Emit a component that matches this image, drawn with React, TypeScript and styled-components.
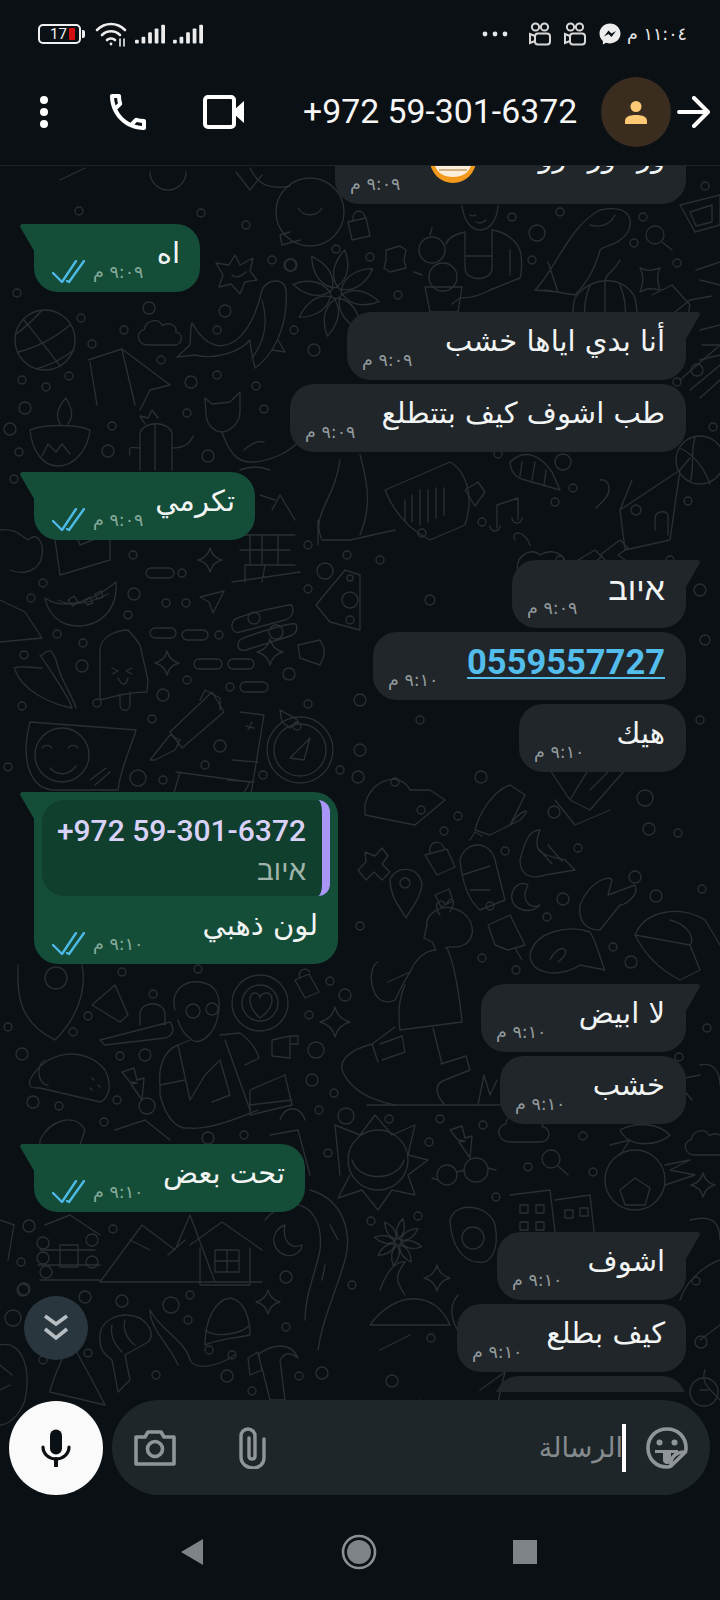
import React from 'react';
import styled, { createGlobalStyle } from 'styled-components';

const ARABIC = '"DejaVu Sans", "Liberation Sans", sans-serif';
const HEBREW = '"Liberation Sans", "DejaVu Sans", sans-serif';
const LATIN = 'Roboto, "Liberation Sans", sans-serif';

const GlobalStyle = createGlobalStyle`
  html, body {
    margin: 0;
    padding: 0;
    background: #0b1014;
  }
`;

const Screen = styled.div`
  width: 720px;
  height: 1600px;
  display: flex;
  flex-direction: column;
  overflow: hidden;
  background: #0b1014;
  color: #fff;
  font-family: ${LATIN};
`;

const StatusBar = styled.div`
  height: 64px;
  flex: none;
  display: flex;
  align-items: center;
  justify-content: space-between;
  padding: 4px 33px 0 38px;
  box-sizing: border-box;
`;

const StatusGroup = styled.div`
  display: flex;
  align-items: center;
  gap: ${({ $gap }: { $gap: number }) => $gap}px;
`;

const BatteryBox = styled.div`
  position: relative;
  width: 43px;
  height: 20px;
  box-sizing: border-box;
  border: 2px solid #f0f0f0;
  border-radius: 5px;
  font-size: 15px;
  line-height: 16px;
  padding-left: 10px;
  color: #f2f2f2;
  margin-right: 6px;

  &::before {
    content: '';
    position: absolute;
    right: 4px;
    top: 2px;
    width: 6px;
    height: 12px;
    border-radius: 1px;
    background: #d40f12;
  }

  &::after {
    content: '';
    position: absolute;
    right: -6px;
    top: 4px;
    width: 3px;
    height: 8px;
    border-radius: 0 2px 2px 0;
    background: #f0f0f0;
  }
`;

const MoreDots = styled.svg`
  display: block;
  margin-right: 8px;
`;

const ClockText = styled.span`
  font-family: ${ARABIC};
  font-size: 17.5px;
  color: #e6e6e6;
  margin-left: -7px;
  direction: rtl;
`;

const Header = styled.header`
  height: 102px;
  flex: none;
  display: flex;
  align-items: center;
  box-sizing: border-box;
  padding: 0 9px 6px 38px;
  border-bottom: 1px solid #1d2226;
`;

const HeaderIcon = styled.svg`
  display: block;
  flex: none;
  margin-right: ${({ $gap }: { $gap: number }) => $gap}px;
`;

const Title = styled.div`
  flex: 1;
  font-size: 33.8px;
  white-space: nowrap;
  color: #f6f6f6;
`;

const Avatar = styled.div`
  width: 70px;
  height: 70px;
  flex: none;
  border-radius: 50%;
  background: #3a2d20;
  display: flex;
  align-items: center;
  justify-content: center;
  margin-right: 6px;
`;

const Chat = styled.main`
  position: relative;
  flex: 1;
  min-height: 0;
  display: flex;
  flex-direction: column;
  overflow: hidden;
`;

const Wallpaper = styled.svg`
  position: absolute;
  inset: 0;
  width: 720px;
  height: 1337px;
  fill: none;
  stroke: #2a2f33;
  stroke-width: 1.35;
  stroke-linecap: round;
  stroke-linejoin: round;
`;

const MessageList = styled.div`
  position: relative;
  flex: 1;
  min-height: 0;
  overflow: hidden;
  display: flex;
  flex-direction: column;
  padding: 0 34px;
  box-sizing: border-box;
`;

const MessageScroller = styled.div`
  display: flex;
  flex-direction: column;
  margin-top: -30px;
`;

type Side = 'in' | 'out';

const Bubble = styled.div<{ $side: Side; $width: number; $tail?: boolean; $gap: number }>`
  position: relative;
  flex: none;
  direction: rtl;
  width: ${({ $width }) => $width}px;
  margin-top: ${({ $gap }) => $gap}px;
  align-self: ${({ $side }) => ($side === 'in' ? 'flex-end' : 'flex-start')};
  background: ${({ $side }) => ($side === 'in' ? '#202629' : '#144d38')};
  border-radius: 24px;
  ${({ $tail, $side }) =>
    $tail && ($side === 'in' ? 'border-top-right-radius: 0;' : 'border-top-left-radius: 0;')}

  ${({ $tail, $side }) =>
    $tail &&
    `&::before {
      content: '';
      position: absolute;
      top: 0;
      width: 15px;
      height: 27px;
      background: inherit;
      ${
        $side === 'in'
          ? 'right: -14px; clip-path: polygon(0 0, 88% 0, 100% 6%, 96% 14%, 6% 100%, 0 100%);'
          : 'left: -14px; clip-path: polygon(100% 0, 12% 0, 0 6%, 4% 14%, 94% 100%, 100% 100%);'
      }
    }`}
`;

const BubbleRow = styled.div<{ $side: Side }>`
  height: 68px;
  display: flex;
  justify-content: space-between;
  box-sizing: border-box;
  padding: ${({ $side }) => ($side === 'in' ? '0 21px 0 15px' : '0 20px 0 18px')};
`;

const MessageText = styled.div<{ $font?: string; $size?: number }>`
  font-family: ${({ $font }) => $font || ARABIC};
  font-size: ${({ $size }) => $size || 29}px;
  line-height: 44px;
  margin-top: 7px;
  white-space: nowrap;
  color: #f2f4f4;
`;

const LinkText = styled.a`
  font-family: ${LATIN};
  font-size: 34.5px;
  font-weight: 700;
  line-height: 44px;
  margin-top: 8px;
  height: 42px;
  color: #53bdeb;
  text-decoration: underline;
  text-decoration-thickness: 2px;
  text-underline-offset: 3px;
`;

const Meta = styled.div`
  display: flex;
  align-items: center;
  gap: 8px;
  height: 24px;
  margin-top: 36px;
`;

const Time = styled.span<{ $side: Side }>`
  font-family: ${ARABIC};
  font-size: 17.5px;
  white-space: nowrap;
  letter-spacing: 0.5px;
  color: ${({ $side }) => ($side === 'in' ? '#949b9f' : '#86ab9a')};
`;

const Quote = styled.div`
  position: relative;
  margin: 8px 8px 0;
  height: 96px;
  box-sizing: border-box;
  border-radius: 22px 12px 12px 22px;
  background: #113f2e;
  overflow: hidden;
  padding: 9px 16px 0 0;
  border-right: 8px solid #a996f7;
`;

const QuoteName = styled.div`
  font-family: ${LATIN};
  font-size: 30px;
  font-weight: 500;
  line-height: 44px;
  color: #d9d2f8;
  direction: ltr;
  text-align: right;
`;

const QuoteBody = styled.div`
  font-family: ${HEBREW};
  font-size: 28px;
  line-height: 36px;
  color: #9fb3a9;
`;

const ScrollDown = styled.div`
  position: absolute;
  left: 24px;
  top: 1130px;
  width: 64px;
  height: 64px;
  border-radius: 50%;
  background: #2a363d;
  display: flex;
  align-items: center;
  justify-content: center;
`;

const ComposerRow = styled.div`
  position: relative;
  flex: none;
  display: flex;
  align-items: center;
  gap: 9px;
  padding: 8px 10px 8px 9px;
`;

const MicButton = styled.div`
  width: 94px;
  height: 94px;
  flex: none;
  border-radius: 50%;
  background: #fafafa;
  display: flex;
  align-items: center;
  justify-content: center;
`;

const Composer = styled.div`
  flex: 1;
  height: 95px;
  border-radius: 48px;
  background: #1f2629;
  display: flex;
  align-items: center;
  box-sizing: border-box;
  padding: 0 22px 0 22px;
`;

const ComposerIcon = styled.svg<{ $gap?: number }>`
  display: block;
  flex: none;
  margin-right: ${({ $gap }) => $gap || 0}px;
`;

const Placeholder = styled.div`
  flex: 1;
  display: flex;
  justify-content: flex-end;
  align-items: center;
  font-family: ${ARABIC};
  font-size: 27px;
  color: #858b8e;
  margin-right: 20px;
`;

const Caret = styled.span`
  width: 4px;
  height: 48px;
  background: #fff;
  margin-left: -1px;
`;

const NavBar = styled.nav`
  height: 97px;
  flex: none;
  display: flex;
  align-items: center;
  box-sizing: border-box;
  padding: 0 183px 0 180px;
  justify-content: space-between;
`;

const NavSquare = styled.div`
  width: 24px;
  height: 24px;
  background: #7e8387;
`;

/* helpers that build wallpaper outlines */
const ring = (x: number, y: number, r: number) =>
  `M${x - r} ${y}a${r} ${r} 0 1 0 ${2 * r} 0a${r} ${r} 0 1 0 ${-2 * r} 0`;
const sparkle = (x: number, y: number, r: number) =>
  `M${x} ${y - r}Q${x + r * 0.2} ${y - r * 0.2} ${x + r} ${y}Q${x + r * 0.2} ${y + r * 0.2} ${x} ${y + r}Q${x - r * 0.2} ${y + r * 0.2} ${x - r} ${y}Q${x - r * 0.2} ${y - r * 0.2} ${x} ${y - r}Z`;
const pill = (x: number, y: number, w: number, h: number) =>
  `M${x + h / 2} ${y}h${w - h}a${h / 2} ${h / 2} 0 0 1 0 ${h}h${h - w}a${h / 2} ${h / 2} 0 0 1 0 ${-h}Z`;
const cloud = (x: number, y: number, s: number) =>
  `M${x} ${y}c${-9 * s} 0 ${-11 * s} ${-11 * s} ${-3 * s} ${-13 * s}c${1 * s} ${-8 * s} ${12 * s} ${-10 * s} ${15 * s} ${-3 * s}c${5 * s} ${-4 * s} ${13 * s} 0 ${11 * s} ${5 * s}c${7 * s} ${1 * s} ${6 * s} ${11 * s} ${-1 * s} ${11 * s}Z`;
const bolt = (x: number, y: number, s: number) =>
  `M${x} ${y}l${12 * s} ${-4 * s}l${3 * s} ${12 * s}l${7 * s} ${-2 * s}l${-2 * s} ${22 * s}l${-11 * s} ${-16 * s}l${6 * s} ${-1 * s}l${-7 * s} ${-1 * s}Z`;
const flower = (x: number, y: number, r: number) => {
  let d = ring(x, y, r * 0.13);
  for (let i = 0; i < 8; i += 1) {
    const a = (i * Math.PI) / 4 + 0.2;
    const s = Math.sin(a);
    const c = Math.cos(a);
    const pt = (u: number, v: number) =>
      `${(x + u * c - v * s).toFixed(1)} ${(y + u * s + v * c).toFixed(1)}`;
    d += `M${pt(r * 0.15, 0)}C${pt(r * 0.4, -r * 0.24)} ${pt(r * 0.75, -r * 0.16)} ${pt(r, 0)}C${pt(r * 0.75, r * 0.16)} ${pt(r * 0.4, r * 0.24)} ${pt(r * 0.15, 0)}Z`;
  }
  return d;
};

const DOTS: number[][] = [
  [79, 211, 4], [201, 213, 4], [246, 225, 4], [272, 260, 4], [290, 265, 6], [336, 249, 4], [149, 308, 6],
  [17, 293, 4], [81, 318, 4], [124, 330, 4], [92, 344, 4], [225, 311, 6], [217, 330, 4], [294, 330, 4],
  [314, 350, 6], [161, 360, 4], [69, 376, 4], [22, 380, 4], [46, 387, 4], [191, 382, 6], [217, 375, 4],
  [256, 386, 4], [25, 408, 6], [10, 429, 6], [19, 452, 4], [112, 426, 4], [108, 451, 6], [187, 413, 4],
  [208, 456, 6], [264, 409, 4], [14, 479, 4], [133, 555, 4], [182, 573, 4], [43, 583, 4], [31, 598, 4],
  [134, 594, 6], [166, 603, 4], [186, 603, 4], [128, 615, 4], [308, 545, 4], [325, 571, 8], [308, 589, 4],
  [347, 555, 4], [57, 634, 4], [83, 643, 4], [24, 655, 4], [82, 666, 6], [219, 635, 4], [289, 674, 6],
  [187, 680, 4], [163, 695, 6], [97, 703, 4], [230, 687, 4], [22, 706, 4], [308, 704, 4], [152, 719, 4],
  [220, 746, 6], [205, 765, 4], [138, 778, 8], [163, 780, 4], [263, 775, 4], [8, 767, 4], [56, 978, 11],
  [122, 972, 4], [153, 994, 4], [88, 1016, 4], [8, 1027, 4], [73, 1032, 4], [22, 1054, 6], [120, 1056, 4],
  [145, 1055, 6], [117, 1100, 4], [33, 1102, 6], [59, 1106, 4], [147, 1106, 8], [104, 1122, 4],
  [244, 1135, 4], [208, 1138, 6], [198, 969, 4], [330, 981, 4], [345, 995, 6], [309, 1015, 4], [316, 1050, 8],
  [312, 1080, 6], [334, 1093, 4], [319, 1110, 4], [346, 1116, 8], [328, 1153, 4], [29, 1226, 6], [113, 1229, 4],
  [21, 1262, 4], [286, 1277, 6], [23, 1290, 6], [190, 1295, 4], [352, 1285, 4], [358, 777, 6], [395, 782, 4],
  [481, 777, 6], [554, 812, 6], [421, 810, 4], [458, 816, 4], [444, 831, 4], [645, 798, 8], [649, 829, 6],
  [678, 833, 4], [578, 848, 4], [505, 851, 4], [635, 877, 6], [702, 889, 4], [563, 899, 6], [656, 896, 6],
  [490, 906, 4], [547, 917, 4], [360, 926, 4], [482, 958, 4], [516, 970, 4], [613, 947, 4], [631, 962, 6],
  [389, 1119, 4], [440, 1119, 4], [483, 1125, 4], [429, 1142, 4], [583, 1136, 4], [707, 1028, 4],
  [679, 1057, 4], [528, 1167, 4], [593, 1172, 4], [496, 1197, 4], [418, 1216, 4], [371, 1221, 4], [370, 257, 4],
  [291, 265, 6], [398, 295, 4], [512, 217, 4], [560, 212, 4], [537, 233, 8], [532, 260, 4],
  [634, 243, 4], [643, 217, 4], [705, 186, 4], [677, 263, 4], [563, 462, 8], [498, 454, 4], [573, 488, 4],
  [555, 502, 4], [482, 522, 4], [697, 370, 6], [677, 382, 4], [713, 427, 4], [688, 501, 4], [422, 533, 4],
  [696, 1281, 4], [701, 1342, 6], [431, 1338, 4], [392, 1381, 6], [24, 1289, 6], [13, 1318, 8], [85, 1297, 6],
  [122, 1301, 6], [171, 1305, 8], [188, 1320, 4], [286, 1327, 4], [209, 1350, 4], [232, 1355, 4], [88, 1353, 4],
  [43, 1360, 4], [156, 1375, 4], [227, 1376, 6], [299, 1376, 4], [322, 1373, 6], [252, 1391, 4], [600, 580, 5],
  [560, 560, 4], [700, 590, 6], [380, 560, 4], [430, 600, 5], [350, 620, 4], [670, 560, 4], [705, 640, 5],
  [420, 720, 4], [360, 700, 6], [700, 720, 4], [340, 770, 4], [360, 750, 6],
];

const DOODLES: string[] = [
  // globe
  `${ring(45, 340, 30)}M24 320C36 335 50 352 60 366M18 352C35 348 55 338 70 325M15 335C24 328 34 320 42 310M36 369C50 365 64 358 74 350`,
  // whale
  'M177 357L190 345C191 335 190 328 192 323C197 332 205 342 215 345C240 350 255 320 262 290C268 278 285 278 286 290C288 315 280 350 255 368C252 355 250 345 250 340C240 352 215 360 195 355Z',
  'M262 300C268 320 266 340 252 358M278 340L285 352L272 350',
  // burst star
  'M235 255L240 265L253 258L250 271L257 280L245 282L240 294L231 284L219 287L223 275L216 263L229 265Z',
  'M232 275C236 279 242 276 246 272',
  cloud(148, 345, 1.2),
  // folded paper
  'M88 360L122 349L170 385L150 390L140 410M90 362L97 405M122 350L135 405',
  flower(336, 293, 44),
  // diya lamp
  'M30 430C44 424 76 424 90 430C88 450 74 466 58 466C42 466 32 450 30 430ZM60 424C54 414 60 404 66 398C72 408 74 416 68 424M42 456L48 444L56 452L62 444L70 454',
  // cactus
  'M140 470V435C140 420 172 420 172 435V470M155 424V470M145 424L140 416L148 418L152 410L158 418M172 448C182 448 190 444 193 436M140 448C132 448 128 444 130 455',
  // fox
  'M205 398L212 404L230 402L240 392L240 412C240 424 228 432 222 432C214 432 206 424 206 414ZM222 432C228 450 236 462 250 462C270 462 290 452 300 440M244 450C250 445 256 440 264 442M240 470C250 466 260 466 270 470',
  // iron stack
  'M55 540L60 575L110 560L110 535M70 520L80 545L105 535',
  // left blob tree
  'M0 530C15 528 20 535 28 540C38 530 44 545 42 555C40 572 22 575 10 570M0 600L25 612L42 638L0 642',
  // hut
  'M235 535L295 535M240 550H290M245 565H295M250 535V565M262 535V565M278 535V565M245 565V582M265 565L262 582M232 582L300 572',
  'M272 510L280 495L295 520M260 495L275 500',
  sparkle(210, 560, 12),
  pill(146, 568, 28, 10),
  // paper plane
  'M200 597L224 591L213 613L209 602Z',
  // sliders
  'M234 620C240 615 285 605 292 605C295 615 290 618 285 620L240 632C232 634 230 625 234 620Z',
  ring(254, 618, 6),
  `M240 640C246 636 290 622 296 624C298 630 296 634 290 636L246 650C238 652 236 645 240 640Z${ring(276, 632, 7)}`,
  // watermelon
  'M45 598C65 612 95 600 116 582C118 610 100 626 78 626C60 626 48 614 45 598ZM58 600C72 608 92 602 108 594',
  'M68 600l6 -4l4 6l-5 4ZM84 600l6 -3l3 6l-6 2ZM95 594l6 -3l2 6l-6 2Z',
  // pizza
  'M316 605L345 570L360 575V630L330 622Z',
  `${ring(350, 600, 8)}${ring(350, 578, 3)}`,
  // ice pop
  'M100 700V650C100 636 118 630 128 630L135 638L140 645L148 680L147 692C130 692 115 696 100 700ZM120 694V705C120 712 130 712 130 705V692M112 668l6 3l-6 3M132 668l-6 3l6 3M118 678C122 686 126 686 128 678',
  pill(150, 628, 26, 10),
  pill(182, 630, 26, 10),
  sparkle(167, 663, 12),
  sparkle(270, 652, 13),
  pill(194, 659, 28, 10),
  pill(228, 659, 26, 10),
  pill(240, 682, 28, 10),
  // folder
  'M298 645L320 640L324 648V656L320 665L300 658Z',
  // chillies
  'M15 670C22 690 50 704 72 708C68 695 50 670 40 655M42 668C30 668 22 665 14 668M42 655C50 648 52 650 56 660C60 680 70 690 76 708',
  // bowl smiley
  `M30 722L136 730C130 750 120 770 118 790H55C30 790 20 760 30 722Z${ring(62, 755, 27)}M42 748a6 6 0 0 1 10 0M68 748a6 6 0 0 1 10 0M50 768C58 776 68 776 76 766`,
  'M90 780L106 768M95 785L110 772',
  // pen
  'M150 760L170 735L180 740L175 750L155 760ZM170 732L212 692L224 712L182 748ZM200 700L205 690L220 698L220 710',
  // crossword
  'M240 712L264 715L250 800M232 760L258 762M228 780L254 782M176 772L250 782L240 800M180 772L172 800',
  'M248 730L252 722M246 726L254 728',
  // compass
  `${ring(300, 750, 26)}${ring(300, 750, 33)}M290 758L310 738L304 760ZM280 710C290 716 298 718 298 722L290 728L282 722Z${ring(297, 726, 4)}`,
  // top smile globe
  `${ring(310, 212, 34)}M298 208a14 14 0 0 0 24 0M290 232L280 235L282 245L300 240`,
  // lock small
  'M348 222l18 -4l4 18l-18 4ZM353 220c-1 -10 10 -12 12 -3',
  // puzzle
  'M386 250l14 -4l6 4l-2 10l2 8l-16 4l-6 -4l2 -8Z',
  // gardener
  'M462 206C464 222 472 230 480 230C490 230 497 220 498 206M470 215a4 2 0 0 0 6 0M476 222C480 224 484 222 486 220',
  'M465 232C455 234 448 238 446 244M492 230C505 232 518 240 521 254C522 265 522 272 520 278L490 290C480 296 470 298 460 298L452 304',
  'M465 232V256H492V230M465 256V268C465 282 492 282 492 268V256M510 250V275',
  `${ring(432, 250, 13)}${ring(443, 277, 14)}M425 287H462L458 312H430ZM422 275L414 272M430 235L432 228`,
  // fish
  'M535 290C555 270 570 225 600 210C625 205 635 215 628 232C620 245 605 245 600 250C595 270 585 285 575 295L545 290M535 290L558 292L548 262',
  'M590 225C600 228 610 225 615 215',
  // lens
  `${ring(655, 235, 9)}M662 242L672 250`,
  // frame
  'M680 205L720 195V225L695 232Z',
  'M690 212L712 205V222L696 226Z',
  // pumpkin
  'M575 298C590 275 625 275 635 298C640 320 635 335 625 340H585C575 330 570 315 575 298ZM605 280V340M590 285C580 310 585 330 595 340M620 285C630 310 625 330 615 340M605 280C608 272 615 270 620 260',
  // sparkle square
  'M640 268C650 272 652 270 660 268C656 275 658 285 660 290C650 288 648 288 640 292C644 282 644 275 640 268Z',
  // hammer at right top
  'M652 295L672 285L690 305L682 345M665 320L690 300L712 296',
  'M700 280L720 285M696 270L720 262',
  'M700 330L720 325M702 345L720 345M700 360L720 355',
  // audio speaker
  'M385 490L450 462C465 470 475 495 465 525L430 540C410 530 395 515 385 490ZM405 500V520M412 495V522M420 490V525M428 490V522M436 488V518M444 488V515',
  // person legs left
  'M340 460C335 500 310 515 322 540H350L395 530M360 455C370 490 370 510 360 535M318 520V545',
  // shell
  'M510 462C525 448 540 455 552 472L560 490L525 480C515 478 510 470 510 462Z',
  'M522 462L520 476M535 462L532 480M546 470L544 486',
  // note + music
  'M497 505L518 498V520M497 505V528M490 526a5 5 0 1 0 10 0M512 518a5 5 0 1 0 10 0',
  'M465 490L478 482L485 492L475 506Z',
  'M600 480C610 478 612 492 604 500L596 508',
  // cottage right
  'M620 510L680 470L670 540L625 550ZM632 480L620 510M690 458L680 470',
  `${ring(636, 510, 5)}M655 530V518C656 510 668 510 668 516V535`,
  // basketball
  `${ring(700, 460, 24)}M680 448C695 455 705 470 710 484M695 437C690 455 695 470 690 482`,
  // right lower tool
  'M680 380L720 345M690 390L720 365M700 398L720 380',
  // cloud blob + flower bottom
  'M520 575C510 560 530 545 540 555C555 545 575 560 560 575C565 590 545 600 535 590L530 610M515 540C510 530 525 530 530 545',
  'M578 560L595 550L610 565L595 580Z',
  // crossed x
  'M600 555L620 540L628 548L618 555L632 565L622 575L610 565L600 575L592 565L602 556Z',
  // top-left shape
  'M60 180L85 168M150 172a18 18 0 0 0 36 0M236 172L250 190L262 175',
  'M250 168C258 185 270 190 290 186',
  // lower corn
  'M550 770L570 800L590 810L625 770L600 745M570 800L600 750M590 790L620 760M555 800L575 825L610 810',
  // hands
  'M475 830C480 810 495 790 510 785L525 795L510 825C520 810 535 805 520 820L490 835Z',
  'M520 860C525 840 530 830 540 830C530 855 545 855 565 860L575 870L545 875C530 880 520 875 520 860ZM540 850l12 14M548 845l14 16',
  'M580 905C590 880 610 875 612 880L608 895L635 885C640 895 625 905 620 905L600 930C585 930 578 920 580 905Z',
  // bottle
  'M460 860C465 840 490 840 495 860L505 900L480 910C468 900 462 880 460 860ZM470 840L475 832L482 836M462 875L490 866M470 890H490',
  // padlock
  'M425 855l22 -6l8 18l-18 8ZM430 852c-2 -10 10 -14 14 -4',
  // plus + pin
  'M365 852L375 856L382 848L388 856L382 864L390 872L382 880L374 872L366 880L358 870L366 862Z',
  `M390 880C395 865 420 865 422 885C420 900 410 910 406 918C398 905 390 895 390 880Z${ring(405, 883, 5)}`,
  'M435 895l14 -6l4 12l-12 6Z',
  'M365 805C370 780 400 770 410 790L430 790L445 800L415 825L365 815Z',
  // crescents
  'M528 885C520 900 530 910 540 905C530 915 515 910 512 900C510 888 520 880 528 885Z',
  // speech bubble
  'M530 955C535 930 570 925 590 932C598 945 600 960 605 970L580 965C560 978 530 975 530 955ZM550 960C560 940 575 950 558 962',
  // helmet
  'M635 935C645 910 680 905 705 920L720 945M635 935L690 945L700 970L680 980C660 970 645 955 635 935ZM670 920C690 925 695 940 690 945',
  // pushpin
  'M488 925L510 915L525 945L508 950L495 945ZM515 948L522 960',
  // kneeling person
  'M427 925C425 915 440 905 452 908C470 912 478 930 468 942C460 950 450 945 445 948',
  'M427 925L424 938L432 942L436 950C425 950 415 960 410 972L388 982',
  'M378 962C372 965 370 975 372 985C375 1000 385 1005 395 1000C400 990 405 980 410 972',
  'M447 948C455 965 460 1000 462 1022L400 1030C398 1015 398 1000 405 985',
  'M395 1027L372 1044L378 1062M372 1044C350 1050 340 1058 342 1070C350 1090 370 1100 395 1105',
  'M433 1028L442 1064M380 1044L402 1036L405 1052L382 1060M441 1064L466 1056L470 1070L445 1080C430 1085 440 1100 445 1105',
  'M367 1105H500M478 1105L484 1075L490 1095L497 1080',
  'M440 915C432 905 440 895 446 905C450 895 458 898 450 912',
  'M675 1080L700 1075M700 1065C712 1062 720 1070 720 1085M675 1080L692 1100',
  'M620 1130C640 1120 660 1125 670 1135C660 1145 630 1150 620 1130ZM610 1145L630 1140L620 1155',
  cloud(510, 1142, 1.4),
  cloud(695, 1155, 1.2),
  bolt(450, 1130, 1),
  // sun
  `${ring(378, 1160, 30)}M352 1160C358 1182 398 1182 404 1160M340 1175L335 1125L360 1135L375 1115L392 1135L415 1125L408 1155L428 1160L408 1175L415 1195L392 1190L378 1210L362 1190L338 1198L350 1175`,
  // glasses
  `${ring(447, 1175, 10)}${ring(476, 1170, 12)}M457 1172L465 1170M488 1168L496 1170M438 1180L432 1178`,
  `${ring(551, 1159, 9)}M558 1166L568 1175`,
  // ball + sparkle
  `${ring(635, 1180, 30)}M620 1190L635 1178L650 1188L645 1205L625 1205Z`,
  'M665 1165L690 1160L670 1170L695 1175L665 1185',
  sparkle(703, 1185, 12),
  // buildings
  'M510 1195L550 1190L556 1240M555 1200L590 1195L595 1240',
  'M520 1205h8v8h-8ZM536 1205h8v8h-8ZM520 1222h8v8h-8ZM536 1222h8v8h-8ZM565 1210h8v8h-8ZM580 1208h8v8h-8Z',
  // egg
  `M450 1220C455 1200 490 1205 495 1225C500 1250 490 1265 478 1262C470 1262 452 1255 450 1220Z${ring(473, 1238, 11)}`,
  // right wave
  'M690 1220C710 1215 720 1220 720 1240M680 1300C690 1270 720 1260 720 1260M700 1340L720 1325',
  // person with glasses
  `M175 1010C170 990 185 980 200 982C215 984 222 995 218 1015C215 1035 200 1045 192 1040C185 1035 180 1028 178 1020${ring(193, 1011, 7)}${ring(212, 1009, 6)}`,
  'M160 1085C158 1065 165 1050 178 1045L190 1040M220 1035L240 1033C250 1040 257 1050 259 1058L245 1065M160 1085V1095C165 1115 175 1130 190 1128C205 1130 230 1122 258 1110M160 1085L185 1080',
  'M178 1045L190 1100L205 1075M225 1040L250 1110M205 1075L220 1060L230 1095L212 1102',
  'M250 1090L285 1075L292 1105L250 1115ZM250 1105L292 1100',
  // toothbrush + tube
  'M100 1040L170 1022C176 1030 172 1036 165 1038L105 1045ZM140 1025V1015C140 1000 165 1000 165 1015V1025M92 1005L115 985L128 1015L120 1022Z',
  // taco
  'M30 1080C45 1050 85 1045 105 1070C115 1090 105 1100 100 1102L40 1088C32 1088 28 1088 30 1080ZM45 1060C35 1065 38 1085 48 1085M92 1078l2 2M98 1085l2 2M90 1088l2 2',
  bolt(122, 1072, 1),
  // shield
  'M18 965C18 990 15 1020 55 1040C85 1010 85 980 82 965',
  // heart coffee
  `${ring(260, 1003, 28)}${ring(260, 1003, 18)}M250 1000C250 990 260 992 260 998C260 992 272 990 272 1000C272 1010 260 1018 260 1018C260 1018 250 1010 250 1000Z`,
  // lock + squares
  'M295 980l14 -6l10 18l-14 6ZM300 978c-3 -8 6 -12 10 -6',
  sparkle(335, 1022, 15),
  'M272 1040l18 -4v22l-18 -2ZM290 1036h8v8h-8Z',
  // bag/bread
  'M40 1140C50 1120 75 1112 85 1130L80 1145H40ZM115 1130L145 1120L170 1140',
  'M270 1135L298 1130L310 1175M280 1120C285 1105 300 1105 305 1120',
  // log cabin
  'M45 1225L70 1215L100 1235M40 1250H95M38 1265H100M40 1280H100M60 1245h18v22h-18Z',
  `${ring(43, 1243, 6)}${ring(43, 1258, 6)}${ring(46, 1272, 6)}${ring(92, 1240, 6)}${ring(92, 1262, 6)}`,
  'M0 1220L14 1225L8 1260',
  // mountain + house
  'M100 1282L142 1225L175 1250L190 1215L215 1282M130 1240L150 1250M168 1255L185 1240',
  'M190 1245L222 1222L262 1250M200 1248V1285H250V1248M215 1250h24v22h-24ZM227 1250v22M215 1261h24M100 1282H262',
  // moon and path
  'M285 1225C270 1230 270 1250 285 1255C295 1258 302 1250 302 1245C290 1250 282 1240 285 1225Z',
  'M265 1220C290 1190 325 1205 320 1250C315 1275 305 1295 305 1320M310 1190C345 1200 352 1235 345 1260C335 1295 322 1320 318 1350M330 1225L338 1240M322 1280L325 1265',
  // hat
  'M205 1345C205 1320 215 1300 230 1298C245 1300 250 1320 250 1335C235 1338 215 1340 205 1345ZM205 1330C215 1338 240 1335 250 1325',
  // shrimp
  'M100 1340C98 1320 120 1310 140 1318C150 1325 155 1335 148 1342L125 1355L130 1380L118 1392L112 1360C105 1355 100 1350 100 1340ZM112 1325C110 1335 115 1345 122 1352M125 1320C122 1330 128 1340 135 1345',
  'M150 1310C160 1330 185 1340 190 1360C195 1370 215 1368 235 1355M150 1310C150 1330 170 1345 178 1365',
  sparkle(268, 1302, 12),
  // hammer
  'M248 1358L258 1352L262 1370L250 1375ZM258 1355C270 1345 290 1340 298 1358C290 1352 285 1352 280 1360L285 1400H270L262 1368',
  // tree
  'M70 1340C60 1365 50 1385 50 1392L105 1405M70 1340C78 1355 90 1375 105 1405',
  'M0 1345C20 1340 32 1365 25 1400C18 1420 5 1425 0 1425M0 1365L12 1375M0 1390L10 1385',
  // island + flower
  'M370 1325C395 1290 435 1290 450 1325ZM405 1295C395 1280 395 1275 405 1262C395 1260 385 1275 380 1290M380 1350L410 1335',
  flower(398, 1242, 24),
  sparkle(437, 1278, 13),
  'M458 1295C445 1310 455 1335 470 1340',
  'M420 1400C400 1410 390 1430 395 1480M480 1390L505 1372L495 1415M705 1370C700 1385 712 1390 720 1400',
  `${ring(704, 1392, 14)}M700 1390l8 0`,
];

function Wall() {
  return (
    <Wallpaper viewBox="0 166 720 1337" aria-hidden="true">
      {DOTS.map(([x, y, r], i) => (
        <circle key={i} cx={x} cy={y} r={r} />
      ))}
      {DOODLES.map((d, i) => (
        <path key={i} d={d} />
      ))}
    </Wallpaper>
  );
}

function DoubleCheck() {
  return (
    <svg width="33" height="24" viewBox="0 0 33 24" fill="none" stroke="#4fb9e6" strokeWidth="2.4" strokeLinecap="round" strokeLinejoin="round">
      <path d="M1 13l9 9L24 1" />
      <path d="M15 21l2 1L32 1" />
    </svg>
  );
}

function MessageMeta({ side, time }: { side: Side; time: string }) {
  return (
    <Meta>
      <Time $side={side}>{time}</Time>
      {side === 'out' && <DoubleCheck />}
    </Meta>
  );
}

interface MessageProps {
  side: Side;
  width: number;
  gap: number;
  tail?: boolean;
  time: string;
  text?: string;
  font?: string;
  size?: number;
}

function Message({ side, width, gap, tail, time, text, font, size }: MessageProps) {
  return (
    <Bubble $side={side} $width={width} $gap={gap} $tail={tail}>
      <BubbleRow $side={side}>
        <MessageText $font={font} $size={size}>{text}</MessageText>
        <MessageMeta side={side} time={time} />
      </BubbleRow>
    </Bubble>
  );
}

function Emoji() {
  return (
    <svg width="46" height="46" viewBox="0 0 46 46">
      <circle cx="23" cy="23" r="23" fill="#f39a1d" />
      <path d="M4 22h38c0 12-8 18-19 18S4 34 4 22z" fill="#fbeedb" />
      <path d="M9 33h28" stroke="#c79c66" strokeWidth="1.5" />
    </svg>
  );
}

const FirstRow = styled.div`
  display: flex;
  align-items: flex-start;
`;

const ClippedText = styled(MessageText)`
  width: 189px;
  margin-top: -1px;
  word-spacing: 12px;
`;

const EmojiSlot = styled.span`
  display: block;
  margin-top: 1px;
`;

const SignalIcon = () => (
  <svg width="30" height="22" viewBox="0 0 32 22" fill="#ececec">
    <rect x="0" y="17" width="4" height="4" rx="1" />
    <rect x="7" y="14" width="4" height="7" rx="1" />
    <rect x="14" y="9" width="4" height="12" rx="1" />
    <rect x="21" y="5" width="4" height="16" rx="1" />
    <rect x="28" y="1" width="4" height="20" rx="1" />
  </svg>
);

export default function App() {
  const T09 = '٩:٠٩ م';
  const T10 = '٩:١٠ م';

  return (
    <Screen>
      <GlobalStyle />
      <StatusBar>
        <StatusGroup $gap={8}>
          <BatteryBox>17</BatteryBox>
          <svg width="32" height="26" viewBox="0 0 32 26" fill="none" stroke="#ececec" strokeWidth="2.6" strokeLinecap="round">
            <path d="M2 9c8-8 20-8 28 0" />
            <path d="M7 14c5-5 13-5 18 0" />
            <path d="M12 19c2-2 6-2 8 0" />
            <circle cx="16" cy="23" r="1.4" fill="#ececec" stroke="none" />
            <path d="M25 18v7M29 18v7" strokeWidth="1.6" />
          </svg>
          <SignalIcon />
          <SignalIcon />
        </StatusGroup>
        <StatusGroup $gap={13}>
          <MoreDots width="26" height="6" viewBox="0 0 26 6" fill="#e6e6e6">
            <circle cx="3" cy="3" r="2.4" />
            <circle cx="13" cy="3" r="2.4" />
            <circle cx="23" cy="3" r="2.4" />
          </MoreDots>
          {[0, 1].map((k) => (
            <svg key={k} width="22" height="24" viewBox="0 0 22 24" fill="none" stroke="#d8d8d8" strokeWidth="2">
              <circle cx="6.5" cy="5" r="3.6" />
              <circle cx="15.5" cy="5" r="3.6" />
              <rect x="6" y="11.5" width="15" height="11" rx="3" />
              <path d="M6 14l-5-2v9l5-2" />
            </svg>
          ))}
          <svg width="22" height="22" viewBox="0 0 22 22">
            <path d="M11 0.5C5 0.5 0.5 5 0.5 10.6c0 3 1.3 5.6 3.4 7.4v3.6l3.3-1.8c1.2.4 2.5.6 3.8.6 6 0 10.5-4.4 10.5-9.8S17 .5 11 .5z" fill="#ededed" />
            <path d="M5 13.5l4.5-6 3 3 4.5-2.6-4.5 6-3-3z" fill="#0b1014" />
          </svg>
          <ClockText dir="rtl">١١:٠٤ م</ClockText>
        </StatusGroup>
      </StatusBar>

      <Header>
        <HeaderIcon $gap={54} width="12" height="36" viewBox="0 0 12 36" fill="#fff">
          <circle cx="6" cy="6" r="4" />
          <circle cx="6" cy="18" r="4" />
          <circle cx="6" cy="30" r="4" />
        </HeaderIcon>
        <HeaderIcon $gap={51} width="48" height="48" viewBox="0 0 24 24" fill="#fff">
          <path d="M6.54 5c.06.89.21 1.76.45 2.59l-1.2 1.2c-.41-1.2-.67-2.47-.76-3.79h1.51m9.86 12.02c.85.24 1.72.39 2.6.45v1.49c-1.32-.09-2.59-.35-3.8-.75l1.2-1.19M7.5 3H4c-.55 0-1 .45-1 1 0 9.39 7.61 17 17 17 .55 0 1-.45 1-1v-3.49c0-.55-.45-1-1-1-1.24 0-2.45-.2-3.57-.57-.1-.04-.21-.05-.31-.05-.26 0-.51.1-.71.29l-2.2 2.2c-2.83-1.45-5.15-3.76-6.59-6.59l2.2-2.2c.28-.28.36-.67.25-1.02C8.7 6.45 8.5 5.25 8.5 4c0-.55-.45-1-1-1z" />
        </HeaderIcon>
        <HeaderIcon $gap={58} width="42" height="34" viewBox="0 0 42 34">
          <rect x="2" y="2" width="29" height="30" rx="3" fill="none" stroke="#fff" strokeWidth="4" />
          <path d="M31 15l10-9v22l-10-9z" fill="#fff" />
        </HeaderIcon>
        <Title>+972 59-301-6372</Title>
        <Avatar>
          <svg width="24" height="24" viewBox="0 0 24 24" fill="#fdc974">
            <circle cx="12" cy="6.500" r="5.500" />
            <path d="M1 24v-3c0-4 4-6 11-6s11 2 11 6v3z" />
          </svg>
        </Avatar>
        <svg width="34" height="32" viewBox="0 0 34 32" fill="none" stroke="#fff" strokeWidth="4" strokeLinecap="round" strokeLinejoin="round">
          <path d="M2 16h29M17 2l14 14-14 14" />
        </svg>
      </Header>

      <Chat>
        <Wall />
        <MessageList>
          <MessageScroller>
            <Bubble $side="in" $width={351} $gap={0}>
              <BubbleRow $side="in">
                <FirstRow>
                  <ClippedText>ور ور رو</ClippedText>
                  <EmojiSlot>
                    <Emoji />
                  </EmojiSlot>
                </FirstRow>
                <MessageMeta side="in" time={T09} />
              </BubbleRow>
            </Bubble>
            <Message side="out" width={166} gap={20} tail time={T09} text="اه" />
            <Message side="in" width={339} gap={20} tail time={T09} text="أنا بدي اياها خشب" />
            <Message side="in" width={396} gap={4} time={T09} text="طب اشوف كيف بتتطلع" />
            <Message side="out" width={221} gap={20} tail time={T09} text="تكرمي" />
            <Message side="in" width={174} gap={20} tail time={T09} text="איוב" font={HEBREW} size={32.5} />
            <Bubble $side="in" $width={313} $gap={4}>
              <BubbleRow $side="in">
                <LinkText>0559557727</LinkText>
                <MessageMeta side="in" time={T10} />
              </BubbleRow>
            </Bubble>
            <Message side="in" width={167} gap={4} time={T10} text="هيك" />
            <Bubble $side="out" $width={304} $gap={20} $tail>
              <Quote>
                <QuoteName>+972 59-301-6372</QuoteName>
                <QuoteBody>איוב</QuoteBody>
              </Quote>
              <BubbleRow $side="out">
                <MessageText>لون ذهبي</MessageText>
                <MessageMeta side="out" time={T10} />
              </BubbleRow>
            </Bubble>
            <Message side="in" width={205} gap={20} tail time={T10} text="لا ابيض" />
            <Message side="in" width={186} gap={4} time={T10} text="خشب" />
            <Message side="out" width={271} gap={20} tail time={T10} text="تحت بعض" />
            <Message side="in" width={189} gap={20} tail time={T10} text="اشوف" />
            <Message side="in" width={229} gap={4} time={T10} text="كيف بطلع" />
            <Bubble $side="in" $width={191} $gap={4}>
              <BubbleRow $side="in" />
            </Bubble>
          </MessageScroller>
        </MessageList>

        <ComposerRow>
          <MicButton>
            <svg width="30" height="38" viewBox="0 0 30 38" fill="none">
              <rect x="9" y="0.5" width="12" height="25" rx="6" fill="#0b1014" />
              <path d="M2 18c0 7 6 12 13 12s13-5 13-12" stroke="#0b1014" strokeWidth="3.2" strokeLinecap="round" />
              <path d="M15 30v7" stroke="#0b1014" strokeWidth="4" strokeLinecap="round" />
            </svg>
          </MicButton>
          <Composer>
            <ComposerIcon $gap={62} width="42" height="38" viewBox="0 0 42 38" fill="none" stroke="#8f9599" strokeWidth="3.6">
              <path d="M2 8h9l3-5h13l3 5h10v27H2z" strokeLinejoin="round" />
              <circle cx="21" cy="20" r="7.500" />
            </ComposerIcon>
            <ComposerIcon width="28" height="42" viewBox="0 0 28 42" fill="none" stroke="#8f9599" strokeWidth="3.4" strokeLinecap="round">
              <path d="M26 12v19c0 6-5 10-11 10S3 37 3 30V9c0-4 3-7 7-7s7 3 7 7v20c0 2-1 3-3 3s-3-1-3-3V11" />
            </ComposerIcon>
            <Placeholder>
              <span>الرسالة</span>
              <Caret />
            </Placeholder>
            <ComposerIcon width="42" height="42" viewBox="0 0 42 42" fill="none" stroke="#8f9599" strokeWidth="3.6" strokeLinejoin="round">
              <path d="M21 2c11 0 19 8 19 19 0 2-.2 3-.5 4L25 39c-1 .6-2.500 1-4 1C10 40 2 32 2 21S10 2 21 2z" />
              <circle cx="13.500" cy="15.500" r="3" fill="#8f9599" stroke="none" />
              <circle cx="28.500" cy="15.500" r="3" fill="#8f9599" stroke="none" />
              <path d="M9 23h23v3H25v8c0 3-6 5-8 0v-8H9z" fill="#8f9599" stroke="none" />
              <path d="M25 39c-1-8 4-14 14-14" />
            </ComposerIcon>
          </Composer>
        </ComposerRow>

        <ScrollDown>
          <svg width="26" height="28" viewBox="0 0 26 28" fill="none" stroke="#b7bec2" strokeWidth="3.6">
            <path d="M2 2l11 8 11-8" />
            <path d="M2 15l11 9 11-9" />
          </svg>
        </ScrollDown>
      </Chat>

      <NavBar>
        <svg width="24" height="28" viewBox="0 0 24 28" fill="#7e8387">
          <path d="M23 1v26L1 14z" />
        </svg>
        <svg width="36" height="36" viewBox="0 0 36 36">
          <circle cx="18" cy="18" r="16" fill="none" stroke="#8b9094" strokeWidth="2.6" />
          <circle cx="18" cy="18" r="12" fill="#7e8387" />
        </svg>
        <NavSquare />
      </NavBar>
    </Screen>
  );
}
